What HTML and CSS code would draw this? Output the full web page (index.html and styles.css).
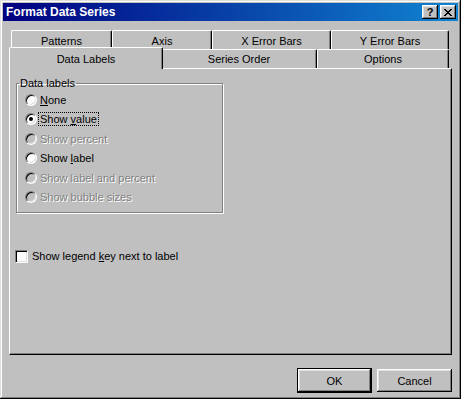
FILE: index.html
```html
<!DOCTYPE html>
<html lang="en">
<head>
  <meta charset="UTF-8" />
  <meta name="viewport" content="width=device-width, initial-scale=1.0"/>
  <title>Format Data Series</title>
  <link rel="stylesheet" href="styles.css">
</head>
<body>
  <div class="window">
    <div class="titlebar">
      <span class="title">Format Data Series</span>
      <div class="title-buttons">
        <span class="tbtn help">?</span>
        <span class="tbtn">
          <svg width="8" height="7" viewBox="0 0 8 7">
            <path d="M0 0h2v1h1v1h2v-1h1v-1h2v1h-1v1h-1v1h-1v1h1v1h1v1h1v1h-2v-1h-1v-1h-2v1h-1v1h-2v-1h1v-1h1v-1h1v-1h-1v-1h-1v-1h-1z" fill="#000"/>
          </svg>
        </span>
      </div>
    </div>

    <div class="content">
      <div class="tabrow back">
        <div class="tab tab-patterns">Patterns</div>
        <div class="tab tab-axis">Axis</div>
        <div class="tab tab-xerr">X Error Bars</div>
        <div class="tab tab-yerr">Y Error Bars</div>
      </div>
      <div class="tabrow front">
        <div class="tab tab-labels selected">Data Labels</div>
        <div class="tab tab-order">Series Order</div>
        <div class="tab tab-options">Options</div>
      </div>

      <div class="panel">
        <fieldset class="group">
          <legend>Data labels</legend>
          <div class="opt"><span class="radio"></span><span><u>N</u>one</span></div>
          <div class="opt"><span class="radio checked"></span><span class="focus">Show <u>v</u>alue</span></div>
          <div class="opt disabled"><span class="radio"></span><span>Show percent</span></div>
          <div class="opt"><span class="radio"></span><span>Show <u>l</u>abel</span></div>
          <div class="opt disabled"><span class="radio"></span><span>Show label and percent</span></div>
          <div class="opt disabled"><span class="radio"></span><span>Show bubble sizes</span></div>
        </fieldset>

        <div class="check-row">
          <span class="checkbox"></span>
          <span>Show legend <u>k</u>ey next to label</span>
        </div>
      </div>

      <div class="actions">
        <button type="button" class="btn default">OK</button>
        <button type="button" class="btn">Cancel</button>
      </div>
    </div>
  </div>
</body>
</html>
```

FILE: styles.css
```css
body {
  margin: 0;
  font-family: "Liberation Sans", Arial, sans-serif;
  font-size: 11px;
  color: #000;
  background: #c0c0c0;
}
.window {
  width: 461px;
  height: 399px;
  box-sizing: border-box;
  padding: 3px;
  background: #c0c0c0;
  box-shadow: inset -1px -1px #000, inset 1px 1px #dfdfdf, inset -2px -2px #808080, inset 2px 2px #fff;
}
.titlebar {
  height: 18px;
  display: flex;
  align-items: center;
  justify-content: space-between;
  padding: 0 2px 0 3px;
  background: linear-gradient(to right, #000080, #1084d0);
}
.title {
  color: #fff;
  font-weight: bold;
  font-size: 12px;
}
.title-buttons {
  display: flex;
  gap: 2px;
}
.tbtn {
  width: 16px;
  height: 14px;
  box-sizing: border-box;
  display: flex;
  align-items: center;
  justify-content: center;
  background: #c0c0c0;
  box-shadow: inset -1px -1px #000, inset 1px 1px #fff, inset -2px -2px #808080, inset 2px 2px #dfdfdf;
}
.tbtn.help {
  font-weight: bold;
  font-size: 11px;
  line-height: 14px;
}
.content {
  padding: 9px 6px 0 6px;
}
.tabrow {
  display: flex;
  height: 19px;
}
.tabrow.back {
  margin-left: 2px;
}
.tabrow.front {
  padding-left: 2px;
  align-items: flex-end;
}
.tab {
  height: 19px;
  box-sizing: border-box;
  text-align: center;
  line-height: 13px;
  padding-top: 4px;
  background: #c0c0c0;
  border-top: 1px solid #fff;
  border-left: 1px solid #fff;
  border-right: 1px solid #000;
  border-radius: 2px 2px 0 0;
  box-shadow: inset -1px 0 #808080;
}
.tabrow.front .tab {
  padding-top: 3px;
}
.tab-patterns { width: 101px; }
.tab-axis { width: 100px; }
.tab-xerr { width: 119px; }
.tab-yerr { width: 118px; }
.tab-labels { width: 154px; }
.tab-order { width: 156px; }
.tab-options { width: 132px; }
.tab.selected {
  position: relative;
  z-index: 2;
  height: 22px;
  margin: 0 -2px -1px -2px;
}
.tabrow.front .tab.selected {
  padding-top: 5px;
}
.panel {
  height: 287px;
  box-sizing: border-box;
  padding: 8px 6px 0 6px;
  border: 1px solid;
  border-color: #fff #000 #000 #fff;
  box-shadow: inset -1px -1px #808080;
}
.group {
  width: 207px;
  box-sizing: border-box;
  margin: 0;
  padding: 0 0 5px 0;
  border: 1px solid #808080;
  box-shadow: inset 1px 1px #fff, 1px 1px #fff;
}
.group legend {
  margin-left: 2px;
  padding: 0 1px;
  line-height: 13px;
}
.opt {
  display: flex;
  align-items: center;
  gap: 3px;
  height: 19.5px;
  padding-left: 8px;
}
.opt.disabled {
  color: #808080;
  text-shadow: 1px 1px #fff;
}
.radio {
  width: 12px;
  height: 12px;
  box-sizing: border-box;
  display: flex;
  align-items: center;
  justify-content: center;
  border-radius: 50%;
  background: #fff;
  border: 1px solid;
  border-color: #808080 #fff #fff #808080;
  box-shadow: inset 1px 1px #000, inset -1px -1px #dfdfdf;
}
.opt.disabled .radio {
  background: #c0c0c0;
}
.radio.checked::after {
  content: "";
  width: 4px;
  height: 4px;
  border-radius: 50%;
  background: #000;
}
.focus {
  margin-left: -2px;
  padding: 0 1px;
  line-height: 12px;
  border: 1px dotted #000;
}
.check-row {
  display: flex;
  align-items: center;
  gap: 4px;
  height: 20px;
  margin: 33px 0 0 -1px;
}
.checkbox {
  width: 13px;
  height: 13px;
  box-sizing: border-box;
  background: #fff;
  border: 1px solid;
  border-color: #808080 #fff #fff #808080;
  box-shadow: inset 1px 1px #000, inset -1px -1px #dfdfdf;
}
.actions {
  display: flex;
  justify-content: flex-end;
  align-items: center;
  gap: 5px;
  margin-top: 13px;
}
.btn {
  width: 75px;
  height: 23px;
  padding: 0;
  font-family: inherit;
  font-size: 11px;
  background: #c0c0c0;
  border: none;
  box-shadow: inset -1px -1px #000, inset 1px 1px #fff, inset -2px -2px #808080, inset 2px 2px #dfdfdf;
}
.btn.default {
  height: 25px;
  border: 1px solid #000;
}
```
